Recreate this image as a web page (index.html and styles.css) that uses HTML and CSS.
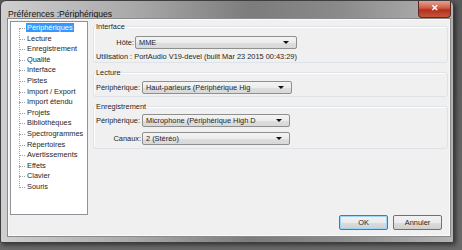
FILE: index.html
```
<!DOCTYPE html>
<html lang="fr">
<head>
    <meta charset="UTF-8">
    <title>Préférences :Périphériques</title>
    <link rel="stylesheet" href="styles.css">
</head>
<body>
    <div class="window">
        <div class="titlebar">
            <span class="title">Préférences :Périphériques</span>
            <div class="close-btn">&#x2715;</div>
        </div>
        <div class="client">
            <div class="main">
                <ul class="tree">
                    <li><span class="selected">Périphériques</span></li>
                    <li><span>Lecture</span></li>
                    <li><span>Enregistrement</span></li>
                    <li><span>Qualité</span></li>
                    <li><span>Interface</span></li>
                    <li><span>Pistes</span></li>
                    <li><span>Import / Export</span></li>
                    <li><span>Import étendu</span></li>
                    <li><span>Projets</span></li>
                    <li><span>Bibliothèques</span></li>
                    <li><span>Spectrogrammes</span></li>
                    <li><span>Répertoires</span></li>
                    <li><span>Avertissements</span></li>
                    <li><span>Effets</span></li>
                    <li><span>Clavier</span></li>
                    <li><span>Souris</span></li>
                </ul>
                <div class="panels">
                    <fieldset class="group group-interface">
                        <legend>Interface</legend>
                        <div class="row row-host">
                            <label class="lbl lbl-host">Hôte:</label>
                            <div class="select select-host">MME<span class="arrow"></span></div>
                        </div>
                        <div class="info">Utilisation : PortAudio V19-devel (built Mar 23 2015 00:43:29)</div>
                    </fieldset>
                    <fieldset class="group group-play">
                        <legend>Lecture</legend>
                        <div class="row row-play">
                            <label class="lbl">Périphérique:</label>
                            <div class="select select-play">Haut-parleurs (Périphérique Hig<span class="arrow"></span></div>
                        </div>
                    </fieldset>
                    <fieldset class="group group-rec">
                        <legend>Enregistrement</legend>
                        <div class="row row-rec">
                            <label class="lbl">Périphérique:</label>
                            <div class="select select-rec">Microphone (Périphérique High D<span class="arrow"></span></div>
                        </div>
                        <div class="row row-chan">
                            <label class="lbl lbl-right">Canaux:</label>
                            <div class="select select-rec">2 (Stéréo)<span class="arrow"></span></div>
                        </div>
                    </fieldset>
                </div>
            </div>
            <div class="buttons">
                <button class="btn btn-default">OK</button>
                <button class="btn">Annuler</button>
            </div>
        </div>
    </div>
</body>
</html>
```
FILE: styles.css
```
body {
    margin: 0;
    width: 462px;
    height: 250px;
    background: linear-gradient(to bottom, #5a5a5a, #6a6a6a);
    font-family: "Liberation Sans", Arial, sans-serif;
    font-size: 7.4px;
    color: #1e1e1e;
    overflow: hidden;
}
.window {
    width: 452px;
    height: 241px;
    border: 1px solid #3e3e3e;
    border-radius: 6px 6px 2px 2px;
    background: linear-gradient(to right, #cfcfcf 0%, #a8a8a8 30%, #7c7c7c 55%, #8a8a8a 75%, #b4b4b4 100%);
    box-shadow: 2px 2px 4px rgba(0, 0, 0, 0.5);
    display: flex;
    flex-direction: column;
}
.titlebar {
    height: 21px;
    display: flex;
    justify-content: space-between;
    align-items: flex-start;
    padding-left: 7px;
}
.title {
    font-size: 8.6px;
    margin-top: 8px;
    color: #111;
}
.close-btn {
    width: 31px;
    height: 16px;
    margin-right: 2px;
    border: 1px solid #5c2a22;
    border-top: none;
    border-radius: 0 0 4px 4px;
    background: linear-gradient(to bottom, #e3a393 0%, #cf5a43 45%, #b2301a 55%, #c9563c 100%);
    color: #fff;
    font-size: 9px;
    font-weight: bold;
    text-align: center;
    line-height: 15px;
}
.client {
    flex: 1;
    margin: 0 3px 6px 7px;
    border: 1px solid #fafafa;
    outline: 1px solid #8a8a8a;
    background: #f0f0f0;
    display: flex;
    flex-direction: column;
}
.main {
    display: flex;
    flex: 1;
}
.tree {
    list-style: none;
    margin: 1px 0 0 1px;
    padding: 1px 0 0 15px;
    width: 61px;
    height: 191px;
    background: #fff;
    border: 1px solid #8f949b;
    position: relative;
}
.tree::before {
    content: "";
    position: absolute;
    left: 8px;
    top: 6px;
    height: 158px;
    border-left: 1px dotted #a0a0a0;
}
.tree li {
    height: 10.6px;
    line-height: 10.6px;
    position: relative;
    white-space: nowrap;
}
.tree li::before {
    content: "";
    position: absolute;
    left: -7px;
    top: 5px;
    width: 6px;
    border-top: 1px dotted #a0a0a0;
}
.tree li span {
    padding: 0 1px;
}
.tree .selected {
    background: #3399ff;
    color: #fff;
    display: inline-block;
    line-height: 9px;
}
.panels {
    flex: 1;
    padding: 2px 1px 0 5px;
}
.group {
    box-sizing: border-box;
    border: 1px solid #dde3e8;
    border-radius: 3px;
    margin: 0;
    padding: 0 2px;
    box-shadow: inset 1px 1px 0 #fff;
}
.group legend {
    padding: 0 1px;
    margin-left: -1px;
    line-height: 9px;
}
.group-interface {
    height: 41px;
}
.group-play {
    margin-top: 5px;
    height: 29px;
}
.group-rec {
    margin-top: 5px;
    height: 47px;
}
.row {
    display: flex;
    align-items: center;
}
.row-host {
    margin-top: 5px;
}
.row-play {
    margin-top: 4px;
}
.row-rec {
    margin-top: 3px;
}
.row-chan {
    margin-top: 5px;
}
.lbl {
    width: 45px;
    margin-right: 1px;
}
.lbl-host {
    text-align: right;
    width: 38px;
}
.lbl-right {
    text-align: right;
}
.select {
    height: 11px;
    line-height: 11px;
    border: 1px solid #8e8f8f;
    border-radius: 2px;
    background: linear-gradient(to bottom, #f4f4f4 0%, #ececec 50%, #dedede 51%, #d8d8d8 100%);
    padding-left: 3px;
    position: relative;
    white-space: nowrap;
}
.select .arrow {
    position: absolute;
    right: 7px;
    top: 4px;
    border-left: 3px solid transparent;
    border-right: 3px solid transparent;
    border-top: 3px solid #111;
}
.select-host {
    width: 157px;
}
.select-play {
    width: 145px;
}
.select-rec {
    width: 143px;
}
.info {
    margin-top: 3px;
    line-height: 10px;
}
.buttons {
    display: flex;
    justify-content: flex-end;
    gap: 5px;
    padding: 0 7px 5px 0;
}
.btn {
    width: 49px;
    height: 15px;
    padding: 0;
    border: 1px solid #707070;
    border-radius: 2px;
    background: linear-gradient(to bottom, #f2f2f2 0%, #ebebeb 50%, #dddddd 51%, #cfcfcf 100%);
    font-family: "Liberation Sans", Arial, sans-serif;
    font-size: 7.4px;
    color: #1e1e1e;
}
.btn-default {
    border-color: #3c7fb1;
    box-shadow: inset 0 0 0 1px #9fd6f5;
}
```
